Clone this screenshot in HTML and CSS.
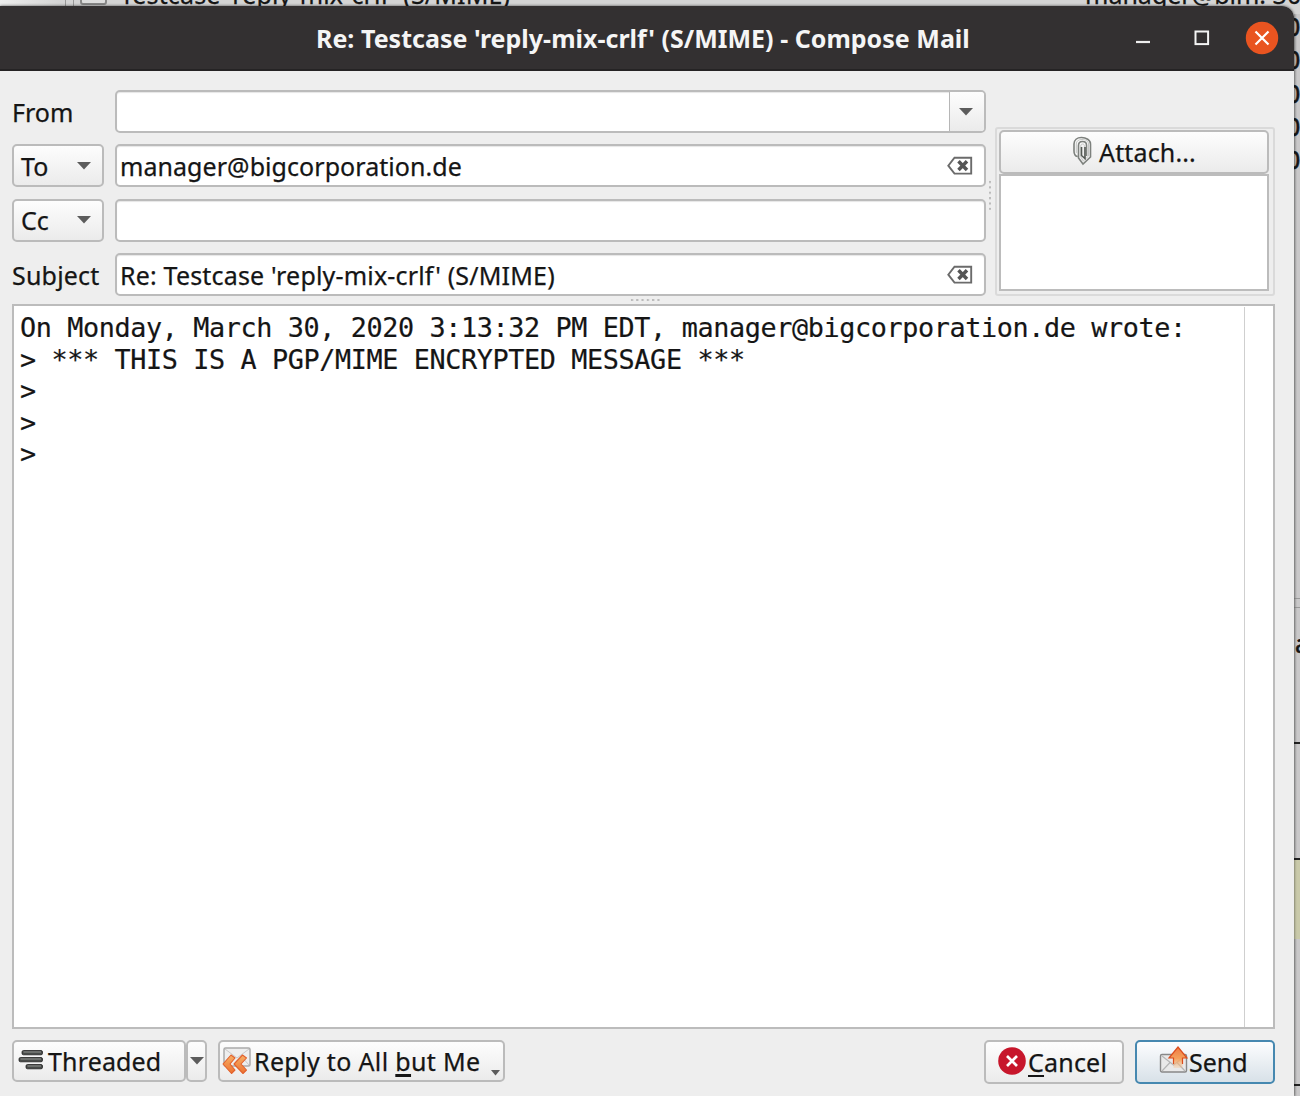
FILE: index.html
```html
<!DOCTYPE html>
<html lang="en">
<head>
<meta charset="utf-8">
<title>Compose Mail</title>
<link rel="stylesheet" href="styles.css">
</head>
<body>
<div class="desktop">
  <div class="behind">
    <div class="behind-row">
      <span class="behind-line l1"></span><span class="behind-line l2"></span><span class="behind-mail"></span>
      <span class="behind-subject">Testcase 'reply-mix-crlf' (S/MIME)</span>
      <span class="behind-from">manager@bim! 30</span>
    </div>
    <div class="behind-edge">
      <span class="digit d1">0</span><span class="digit d2">0</span><span class="digit d3">0</span><span class="digit d4">0</span><span class="digit d5">0</span>
      <span class="handle"></span><span class="digit letter">a</span>
      <span class="rule r1"></span><span class="rule r2"></span><span class="note"></span><span class="rule r3"></span>
    </div>
  </div>

  <main class="window">
    <header class="titlebar">
      <h1 class="title">Re: Testcase 'reply-mix-crlf' (S/MIME) - Compose Mail</h1>
      <div class="controls">
        <svg class="minimize" width="16" height="16" viewBox="0 0 16 16"><path d="M1 12H15" stroke="#eee" stroke-width="2.2"/></svg>
        <svg class="maximize" width="16" height="16" viewBox="0 0 16 16"><rect x="1.5" y="1.5" width="12.6" height="12.6" fill="none" stroke="#f4f4f4" stroke-width="2"/></svg>
        <svg class="close" width="34" height="34" viewBox="0 0 34 34"><circle cx="17" cy="17" r="16.2" fill="#e95420"/><path d="M10.5 10.5 23.5 23.5M23.5 10.5 10.5 23.5" stroke="#fff" stroke-width="2.2"/></svg>
      </div>
    </header>

    <section class="head">
      <div class="fields">
        <span class="label">From</span>
        <div class="combo"><div class="combo-text"></div><div class="combo-arrow"><svg width="14" height="8" viewBox="0 0 14 8"><path d="M0 0H14L7 7.5Z" fill="#5c5c5c"/></svg></div></div>
        <button class="kind">To<svg width="14" height="8" viewBox="0 0 14 8"><path d="M0 0H14L7 7.5Z" fill="#5c5c5c"/></svg></button>
        <div class="input"><span class="address">manager@bigcorporation.de</span><svg class="clear" width="26" height="20" viewBox="0 0 26 20"><path d="M7.5 1.7H24.2V17.6H7.5L1.3 9.7Z" fill="#fff" stroke="#6b6b6b" stroke-width="1.9"/><path d="M11.5 5.3 20 14M20 5.3 11.5 14" stroke="#555" stroke-width="3.5"/></svg></div>
        <button class="kind">Cc<svg width="14" height="8" viewBox="0 0 14 8"><path d="M0 0H14L7 7.5Z" fill="#5c5c5c"/></svg></button>
        <div class="input"></div>
        <span class="label subject-label">Subject</span>
        <div class="input"><span class="subject">Re: Testcase 'reply-mix-crlf' (S/MIME)</span><svg class="clear" width="26" height="20" viewBox="0 0 26 20"><path d="M7.5 1.7H24.2V17.6H7.5L1.3 9.7Z" fill="#fff" stroke="#6b6b6b" stroke-width="1.9"/><path d="M11.5 5.3 20 14M20 5.3 11.5 14" stroke="#555" stroke-width="3.5"/></svg></div>
      </div>
      <div class="grip-v"></div>
      <aside class="attachments">
        <button class="attach">
          <svg width="20" height="30" viewBox="0 0 20 30" fill="none"><path d="M5.5 20.5C2.5 20 2 18 2 15V8C2 4 5 1.5 9.5 1.5S18.5 4 18.5 8V21L11 28 6.5 22V9.5C6.5 7 8 5.5 10.5 5.5S14.5 7 14.5 9V20" stroke="#7d817d" stroke-width="1.6"/><path d="M4.3 17V8C4.3 5 6.5 3.5 10 3.5S16.5 5 16.5 8V20L11.3 25 8.8 21V10C8.8 8.5 9.5 8 10.7 8S12.4 9 12.4 10.3V21" stroke="#c4c6c4" stroke-width="1"/><path d="M9.5 11V19.5L13 22.5V11" stroke="#555a55" stroke-width="1.6"/></svg>
          <span>Attach...</span>
        </button>
        <div class="attach-list"></div>
      </aside>
    </section>
    <div class="grip-h"></div>

    <section class="editor">
      <pre class="message">On Monday, March 30, 2020 3:13:32 PM EDT, manager@bigcorporation.de wrote:
&gt; *** THIS IS A PGP/MIME ENCRYPTED MESSAGE ***
&gt;
&gt;
&gt;</pre>
      <div class="scroll"></div>
    </section>

    <footer class="actions">
      <button class="btn threaded">
        <svg width="26" height="22" viewBox="0 0 26 22"><g fill="#484b49" stroke="#222" stroke-width=".8"><rect x="4" y="1.5" width="20.5" height="4.3" rx="1.5"/><rect x="1" y="8.5" width="23.5" height="4.3" rx="1.5"/><rect x="8" y="15.5" width="16.5" height="4.3" rx="1.5"/></g><path d="M5.5 3H23M2.5 10H23M9.5 17H23" stroke="#929592"/></svg>
        <span>Threaded</span>
      </button>
      <button class="btn menu"><svg width="14" height="8" viewBox="0 0 14 8"><path d="M0 0H14L7 7.5Z" fill="#5c5c5c"/></svg></button>
      <button class="btn reply">
        <svg width="30" height="30" viewBox="0 0 30 30"><defs><linearGradient id="orange" x2="0" y2="1"><stop stop-color="#f7b066"/><stop offset="1" stop-color="#ed7130"/></linearGradient></defs><rect x="2" y="2" width="26" height="18" rx="1.5" fill="#eee" stroke="#aaa" stroke-width="1.5"/><path d="M3 3 15 12 27 3M3 19 11 10M27 19 19 10" fill="none" stroke="#c8c8c8"/><g fill="url(#orange)" stroke="#e2602c" stroke-width="1.1" stroke-linejoin="round"><path d="M1 18 9 9 13 12 8 18 13 24 9.5 27.5Z"/><path d="M12 18 20.5 9 24.5 12 19 18 24.5 24 21 27.5Z"/></g></svg>
        <span class="reply-text">Reply to All <span class="mnemonic">b</span>ut Me</span>
        <svg class="tiny" width="9" height="6" viewBox="0 0 9 6"><path d="M0 0H9L4.5 5.5Z" fill="#5c5c5c"/></svg>
      </button>
      <button class="btn cancel">
        <svg width="28" height="28" viewBox="0 0 28 28"><circle cx="14" cy="14" r="13.8" fill="#c7162b"/><path d="M9 9 19 19M19 9 9 19" stroke="#fff" stroke-width="2.7"/></svg>
        <span><span class="mnemonic">C</span>ancel</span>
      </button>
      <button class="btn send">
        <svg width="29" height="28" viewBox="0 0 29 28"><defs><linearGradient id="rise" x2="0" y2="1"><stop stop-color="#ee7a42"/><stop offset=".55" stop-color="#f5a15c"/><stop offset="1" stop-color="#f5c08d" stop-opacity=".3"/></linearGradient></defs><rect x="1.5" y="8.5" width="26" height="17.5" rx="1.5" fill="#e9e9e9" stroke="#888" stroke-width="1.4"/><path d="M3 10 14.5 19 26 10M3 25 11 16.5M26 25 18 16.5" fill="none" stroke="#b5b5b5" stroke-width="1.2"/><path d="M19 1 28 12H23.5V22H14.5V12H10Z" fill="url(#rise)"/><path d="M14.5 18V12H10L19 1 28 12H23.5V18" fill="none" stroke="#dc4c1c" stroke-width="1.2"/></svg>
        <span>Send</span>
      </button>
    </footer>
  </main>
</div>
</body>
</html>
```
FILE: styles.css
```css
* { box-sizing: border-box; }
body { margin: 0; background: #c9c8c9; color: #151515; font: 25px/32px "Noto Sans", sans-serif; -webkit-text-stroke: .25px; }
button { font: inherit; color: inherit; margin: 0; }
svg { display: block; flex: none; }

.desktop { position: relative; width: 1300px; height: 1096px; overflow: hidden; display: flex; align-items: flex-end; }

/* mail list showing around the edges of the compose window */
.behind { position: absolute; inset: 0; overflow: hidden; }
.behind-row { position: absolute; left: 0; top: 0; width: 1300px; height: 14px; overflow: hidden; background: linear-gradient(90deg, #eee 0, #d4d4d4 60px); white-space: nowrap; }
.behind-line { position: absolute; top: 0; width: 1px; height: 8px; background: #999; }
.l1 { left: 65px; }
.l2 { left: 73px; }
.behind-mail { position: absolute; left: 80px; top: -14px; width: 27px; height: 19px; border: 2px solid #888; border-radius: 3px; background: #ddd; }
.behind-subject { position: absolute; left: 120px; top: -22px; letter-spacing: .15px; }
.behind-from { position: absolute; left: 1085px; top: -22px; }
.behind-edge { position: absolute; left: 1294px; top: 14px; width: 6px; height: 1082px; overflow: hidden; background: linear-gradient(90deg, #aaa, #c9c8c9 3px); }
.digit { position: absolute; left: -8px; -webkit-text-stroke: .6px; }
.d1 { top: -4px; } .d2 { top: 29px; } .d3 { top: 63px; } .d4 { top: 96px; } .d5 { top: 129px; }
.letter { left: 1px; top: 613px; }
.handle { position: absolute; left: 0; top: 584px; width: 6px; height: 10px; border: solid #999; border-width: 1px 0; }
.rule { position: absolute; left: 0; width: 6px; height: 2px; background: #222; }
.r1 { top: 728px; } .r2 { top: 844px; } .r3 { top: 1070px; }
.note { position: absolute; left: 0; top: 846px; width: 6px; height: 79px; background: #c9c9a9; }

.window { position: relative; display: flex; flex-direction: column; width: 1294px; height: 1090px; background: #eee; border-radius: 0 12px 0 0; box-shadow: 0 0 3px rgba(0,0,0,.65); }
.titlebar { display: flex; align-items: center; flex: none; height: 65px; padding-right: 15px; background: #333031; border-bottom: 2px solid #252324; border-radius: 0 12px 0 0; color: #f5f5f5; }
.title { flex: 1; margin: 0; padding: 1px 0 0 316px; font-size: 25px; line-height: 32px; font-weight: 700; letter-spacing: .02px; white-space: nowrap; -webkit-text-stroke: 0; }
.controls { display: flex; align-items: center; }
.minimize { margin-right: 43px; }
.maximize { margin-right: 35px; }

.head { display: flex; flex: none; height: 227px; padding: 19px 19px 3px 12px; }
.fields { display: grid; grid-template-columns: 92px 871px; grid-auto-rows: 43px; gap: 11.4px 11px; width: 974px; height: 206px; }
.label { align-self: center; padding-top: 1px; white-space: nowrap; }
.subject-label { letter-spacing: .2px; }
.kind, .combo, .input, .btn, .attach { border: 2px solid #bbb; border-radius: 5px; white-space: nowrap; }
.kind, .combo-arrow, .btn, .attach { background: linear-gradient(#fdfdfd, #ebebeb); }
.kind { display: flex; align-items: center; justify-content: space-between; padding: 0 11px 0 7px; }
.combo, .input { display: flex; background: #fff; box-shadow: inset 0 1px 1px #e6e6e6; }
.combo { overflow: hidden; }
.combo-text { flex: 1; }
.combo-arrow { display: flex; align-items: center; justify-content: center; width: 35px; border-left: 1px solid #b6b6b6; padding-right: 3px; }
.input { align-items: center; justify-content: space-between; padding: 0 11px 0 3px; }
.address { letter-spacing: .06px; }
.subject { letter-spacing: .18px; }
.grip-v { flex: none; width: 9px; height: 30px; margin-top: 90px; background: radial-gradient(circle at 4px 2px, #bbb 1px, transparent 1.4px) 0 0 / 9px 5.4px; }
.attachments { display: flex; flex-direction: column; width: 280px; height: 169px; margin-top: 37px; padding: 1px 4px 3px 2px; border: 2px solid #dadada; border-radius: 3px; }
.attach { display: flex; align-items: center; justify-content: center; gap: 7px; height: 44px; padding: 0; flex: none; letter-spacing: .15px; }
.attach svg { margin-top: -3px; }
.attach-list { flex: 1; border: 2px solid #bcbcbc; background: #fff; }
.grip-h { flex: none; width: 30px; height: 5px; margin: 0 0 1px 630px; background: radial-gradient(circle at 2px 2px, #bbb 1px, transparent 1.4px) 0 0 / 5.3px 5px; }

.editor { display: flex; flex: none; justify-content: space-between; height: 725px; margin: 0 19px 0 12px; border: 2px solid #bcbcbc; background: #fff; }
.message { margin: 0; padding: 6px 0 0 6px; font: 26.8px/31.6px "DejaVu Sans Mono", monospace; letter-spacing: -.38px; -webkit-text-stroke: .2px; }
.scroll { width: 29px; margin-top: 1px; border-left: 1px solid #cfcfcf; }

.actions { display: flex; flex: none; align-items: flex-start; padding: 11px 19px 0 12px; }
.btn { display: flex; align-items: center; height: 42px; padding: 0; }
.threaded { width: 174px; padding-left: 4px; gap: 4px; letter-spacing: .15px; }
.threaded svg { margin-top: -3px; }
.menu { width: 21px; justify-content: center; }
.reply { width: 287px; margin-left: 11px; padding-left: 2px; gap: 2px; }
.reply-text { letter-spacing: .35px; }
.tiny { align-self: flex-end; margin: 0 3px 4px auto; }
.mnemonic { text-decoration: underline; text-decoration-thickness: 2px; text-underline-offset: 3px; text-decoration-skip-ink: none; }
.reply .mnemonic { text-decoration-thickness: 3px; }
.cancel { width: 140px; height: 44px; margin-left: auto; padding-left: 12px; gap: 2px; letter-spacing: .2px; }
.cancel svg { margin-top: -3px; }
.send { width: 140px; height: 44px; margin-left: 11px; padding-left: 22px; gap: 1px; border-color: #4688b0; background: linear-gradient(#fcfdfe, #d8e1e8); }
.send svg { margin-top: -4px; }
```
